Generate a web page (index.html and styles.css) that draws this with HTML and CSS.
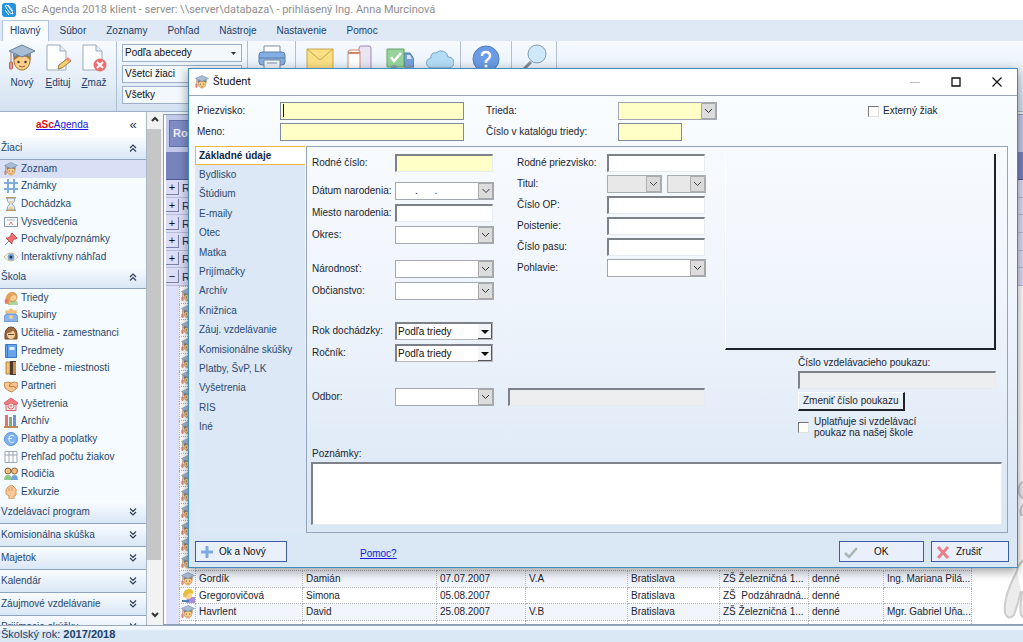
FILE: index.html
```html
<!DOCTYPE html>
<html lang="sk">
<head>
<meta charset="utf-8">
<title>aSc Agenda 2018 klient</title>
<link rel="stylesheet" href="styles.css">
</head>
<body>
<svg class="defs" aria-hidden="true">
  <symbol id="student" viewBox="0 0 28 28">
    <path d="M6 12c-1 9 3 14 8 14s9-5 8-14z" fill="#fbd08b" stroke="#a5702f"/>
    <path d="M6 16c3-1 4-4 8-4s6 2 8 4l1-6H5z" fill="#a97436"/>
    <path d="M6 8v5c5-3 11-3 16 0V8z" fill="#93abc7" stroke="#66809f"/>
    <path d="M14 1L1 7l13 6 13-6z" fill="#a9bdd4" stroke="#66809f"/>
    <path d="M3 8v11" stroke="#a36b62"/><rect x="1.500" y="18" width="3" height="7" rx="1" fill="#f09a8c" stroke="#b25f55"/>
    <circle cx="10.500" cy="18" r="1.200" fill="#4a3320"/><circle cx="17.500" cy="18" r="1.200" fill="#4a3320"/>
    <path d="M11 22q3 2 6 0" fill="none" stroke="#a5602f"/>
  </symbol>
  <symbol id="page" viewBox="0 0 28 28"><path d="M3 1h13l6 6v19H3z" fill="#fdfeff" stroke="#9aa9bb"/><path d="M16 1v6h6" fill="#e9eff6" stroke="#9aa9bb"/></symbol>
  <symbol id="chev-up" viewBox="0 0 8 8"><path d="M1 4l3-3 3 3M1 7.500l3-3 3 3" fill="none" stroke="#2f3f58" stroke-width="1.200"/></symbol>
  <symbol id="chev-down" viewBox="0 0 8 8"><path d="M1 .5l3 3 3-3M1 4l3 3 3-3" fill="none" stroke="#2f3f58" stroke-width="1.200"/></symbol>
</svg>

<header class="titlebar">
  <svg class="i14" viewBox="0 0 14 14"><rect width="14" height="14" rx="3" fill="#2493e0"/><path d="M3 3l5 7 3 1-1-3-5-6zM3 7l4 5M6 2l5 6" fill="none" stroke="#fff"/></svg>
  <span>aSc Agenda 2018 klient - server: \\server\databaza\ - prihlásený Ing. Anna Murcinová</span>
</header>
<nav class="tabs">
  <button class="tab active">Hlavný</button><button class="tab">Súbor</button><button class="tab">Zoznamy</button><button class="tab">Pohľad</button><button class="tab">Nástroje</button><button class="tab">Nastavenie</button><button class="tab">Pomoc</button>
</nav>
<section class="ribbon">
  <div class="group actions">
    <button class="big"><svg class="i28"><use href="#student"/></svg>Nový</button>
    <button class="big"><svg class="i28" viewBox="0 0 28 28"><use href="#page" width="28" height="28"/><path d="M14 25l1-4 9-7 3 3-9 7z" fill="#f5cf6d" stroke="#9b7840"/><path d="M22 15l3 3 2-2-3-3z" fill="#ef8f86"/></svg><span><u>E</u>dituj</span></button>
    <button class="big"><svg class="i28" viewBox="0 0 28 28"><use href="#page" width="28" height="28"/><circle cx="20" cy="21" r="6.500" fill="#ea6f72"/><path d="M17 18l6 6m0-6l-6 6" stroke="#fff" stroke-width="2"/></svg><span><u>Z</u>maž</span></button>
  </div>
  <div class="group filters">
    <select class="flt" aria-label="Zoradenie"><option>Podľa abecedy</option></select>
    <select class="flt" aria-label="Žiaci"><option>Všetci žiaci</option></select>
    <select class="flt" aria-label="Filter"><option>Všetky</option></select>
  </div>
  <div class="group one"><button aria-label="Tlač" class="big"><svg class="i28" viewBox="0 0 28 28"><path d="M6 2h16v9H6z" fill="#fff" stroke="#7c8ca0"/><rect x="1" y="8" width="26" height="13" rx="3" fill="#83aee3" stroke="#5e7ea8"/><path d="M1 14h26" stroke="#5e7ea8"/><path d="M6 16h16v10H6z" fill="#eef3f8" stroke="#7c8ca0"/><path d="M9 19h10" stroke="#7c8ca0"/></svg></button></div>
  <div class="group many">
    <button aria-label="Správa" class="big"><svg class="i28" viewBox="0 0 28 28"><path d="M1 5h26v20H1z" fill="#fbdf83" stroke="#c6a54e"/><path d="M1 5l13 11L27 5" fill="none" stroke="#c6a54e"/></svg></button>
    <button aria-label="Mobil" class="big"><svg class="i28" viewBox="0 0 28 28"><rect x="13" y="2" width="12" height="24" rx="2" fill="#e8e4f2" stroke="#9b8bb5"/><rect x="2" y="6" width="12" height="22" rx="2" fill="#fff" stroke="#d08a6a"/><path d="M2 9h12" stroke="#d08a6a" stroke-width="2"/></svg></button>
    <button aria-label="Doprava" class="big"><svg class="i28" viewBox="0 0 28 28"><path d="M18 9h6l4 6v8H18z" fill="#75a0dc" stroke="#4d73a8"/><path d="M21 11h3l2 4h-5z" fill="#d4e6fa"/><path d="M1 5h17v18H1z" fill="#96d39b" stroke="#64a56b"/><path d="M5 13l3 4 7-8" stroke="#fff" stroke-width="2.500" fill="none"/><circle cx="8" cy="24" r="3" fill="#8b9db0"/><circle cx="22" cy="24" r="3" fill="#8b9db0"/></svg></button>
    <button aria-label="Cloud" class="big"><svg class="i28" viewBox="0 0 28 28"><path d="M6 24a5 5 0 0 1-1-10 4 4 0 0 1 5-5 7 7 0 0 1 12 4 5.500 5.500 0 0 1 1 11z" fill="#b5dcf6" stroke="#78a4c9"/></svg></button>
  </div>
  <div class="group one help"><button aria-label="Pomocník" class="big"><svg class="i28" viewBox="0 0 28 28"><circle cx="14" cy="15" r="13" fill="#6a9be4" stroke="#4c7cc4"/><path d="M10 12q0-4 4-4t4 4q0 2-4 5v2" fill="none" stroke="#fff" stroke-width="2.500"/><circle cx="14" cy="22" r="1.500" fill="#fff"/></svg></button></div>
  <div class="group one find"><button aria-label="Hľadať" class="big"><svg class="i28" viewBox="0 0 28 28"><path d="M11 18L2 27" stroke="#7d8896" stroke-width="3"/><circle cx="17" cy="10" r="9" fill="#cfe9fb" stroke="#7e9cb8"/></svg></button></div>
</section>

<main class="main">
  <aside class="side">
    <div class="brand"><a href="#"><b>aSc</b>Agenda</a><button aria-label="Zbaliť">«</button></div>
    <button class="head">Žiaci<svg><use href="#chev-up"/></svg></button>
    <ul class="items six">
      <li class="sel"><svg><use href="#student"/></svg><a href="#">Zoznam</a></li>
      <li><svg viewBox="0 0 14 14"><path d="M4 0v14M10 0v14M0 4h14M0 10h14" stroke="#82acd8" stroke-width="2"/></svg><a href="#">Známky</a></li>
      <li><svg viewBox="0 0 14 14"><path d="M3 1h8q0 4-3 6 3 2 3 6H3q0-4 3-6-3-2-3-6z" fill="#e4eefa" stroke="#89a4c7"/><path d="M2 .5h10M2 13.500h10" stroke="#b79868" stroke-width="1.500"/><path d="M4 12l3-3 3 3zM5 4h4L7 7z" fill="#f2cf79"/></svg><a href="#">Dochádzka</a></li>
      <li><svg viewBox="0 0 14 14"><path d="M.5 2.500h13v9H.5z" fill="#fff" stroke="#8795aa"/><path d="M3 5h8" stroke="#9fb3cc"/><path d="M5 10l2-3 2 3" fill="none" stroke="#df6e6e"/></svg><a href="#">Vysvedčenia</a></li>
      <li><svg viewBox="0 0 14 14"><path d="M1 13l4-4" stroke="#8291a5"/><path d="M8 1l5 5-1 1-2 0-2 3 0 2-6-6 2 0 3-2 0-2z" fill="#ee7072" stroke="#c75054"/></svg><a href="#">Pochvaly/poznámky</a></li>
      <li><svg viewBox="0 0 14 14"><path d="M0 7q7-8 14 0-7 8-14 0z" fill="#fff" stroke="#d6bb91"/><circle cx="7" cy="7" r="3.500" fill="#7ba7da"/><circle cx="7" cy="7" r="1.500" fill="#26364d"/></svg><a href="#">Interaktívny náhľad</a></li>
    </ul>
    <button class="head">Škola<svg><use href="#chev-up"/></svg></button>
    <ul class="items twelve">
      <li><svg viewBox="0 0 14 14"><path d="M4 14q0-5 5-5t5 5z" fill="#a9d69b"/><circle cx="8.500" cy="6" r="4.500" fill="#fbcf91" stroke="#c78f50"/><path d="M1 13q0-12 7-12 4 0 4 4-6-3-7 8z" fill="#e3a05a"/><circle cx="2.500" cy="10" r="2" fill="#ee7774"/></svg><a href="#">Triedy</a></li>
      <li><svg viewBox="0 0 14 14"><circle cx="3" cy="4" r="2" fill="#f2c078"/><circle cx="11" cy="4" r="2" fill="#f2c078"/><circle cx="7" cy="3" r="2.500" fill="#f2c078"/><path d="M0 11q0-5 4-5h6q4 0 4 5v3H0z" fill="#8cb4e6" stroke="#5a8cc4"/><circle cx="7" cy="9" r="2" fill="#f2d091"/></svg><a href="#">Skupiny</a></li>
      <li><svg viewBox="0 0 14 14"><path d="M1 13Q0 1 7 1t6 12z" fill="#9a6740" stroke="#704826"/><ellipse cx="7" cy="8.500" rx="4" ry="4.500" fill="#fbd09b"/><path d="M3 7q5 0 6-3l2 3V3H3z" fill="#9a6740"/><path d="M4 8.500h6" stroke="#6c4a30"/></svg><a href="#">Učitelia - zamestnanci</a></li>
      <li><svg viewBox="0 0 14 14"><path d="M1.500.5h11v13h-11z" fill="#69a5ea" stroke="#3c78c4"/><path d="M3.500.5v13" stroke="#3c78c4"/><path d="M5.500 3h5v3h-5z" fill="#e6f2ff"/></svg><a href="#">Predmety</a></li>
      <li><svg viewBox="0 0 14 14"><path d="M2 1h4v12H2z" fill="#f3c277" stroke="#b38240"/><path d="M6 0h6v14H6z" fill="#4b3b2e"/><path d="M9 1l3 0v12l-3 0z" fill="#c78e4e"/></svg><a href="#">Učebne - miestnosti</a></li>
      <li><svg viewBox="0 0 14 14"><path d="M0 4l4-1 3 1 3-1 4 1-1 5-5 4-3-1-4-3z" fill="#f9c690" stroke="#c28b52"/><path d="M7 4L5 7l2 1 2-1 3 2" fill="none" stroke="#b07840"/></svg><a href="#">Partneri</a></li>
      <li><svg viewBox="0 0 14 14"><path d="M2 6h10v7.500H2z" fill="#fde8e8" stroke="#d46a70"/><path d="M0 6l7-5 7 5-1 1.500H1z" fill="#f07c80" stroke="#d46a70"/><circle cx="7" cy="9" r="3" fill="#fff" stroke="#e06a70"/><path d="M5.500 9h3M7 7.500v3" stroke="#e06a70"/></svg><a href="#">Vyšetrenia</a></li>
      <li><svg viewBox="0 0 14 14"><path d="M1 1h3v11H1z" fill="#e2736e"/><path d="M5 3h3v9H5z" fill="#78b279"/><path d="M9 1h3v11H9z" fill="#7490d6"/><path d="M0 13h14" stroke="#c08a52" stroke-width="2"/></svg><a href="#">Archív</a></li>
      <li><svg viewBox="0 0 14 14"><circle cx="7" cy="7" r="6.500" fill="#7eb3ee" stroke="#5a92d4"/><path d="M10 4Q5 2 5 7t5 3M4 6.500h4" fill="none" stroke="#dff0ff"/></svg><a href="#">Platby a poplatky</a></li>
      <li><svg viewBox="0 0 14 14"><path d="M1 1.500h12v11H1zM5 1v12M9 1v12M1 5h12" fill="#fff" stroke="#9aa6b5"/></svg><a href="#">Prehľad počtu žiakov</a></li>
      <li><svg viewBox="0 0 14 14"><circle cx="4" cy="4" r="3" fill="#f0bd82" stroke="#8a6239"/><circle cx="10.500" cy="4" r="3" fill="#f0bd82" stroke="#8a6239"/><path d="M0 13q0-5 4-5t4 5z" fill="#8dc88c"/><path d="M7 13q0-5 3.500-5t3.500 5z" fill="#78a2de"/></svg><a href="#">Rodičia</a></li>
      <li><svg viewBox="0 0 14 14"><path d="M4 2l4-2 2 2 2 2v6l-2 1v3H5v-3L2 9V5z" fill="#fbc795" stroke="#d2955c"/><path d="M5 3v3M8 2v4" stroke="#d2955c"/></svg><a href="#">Exkurzie</a></li>
    </ul>
    <button class="head">Vzdelávací program<svg><use href="#chev-down"/></svg></button>
    <button class="head">Komisionálna skúška<svg><use href="#chev-down"/></svg></button>
    <button class="head">Majetok<svg><use href="#chev-down"/></svg></button>
    <button class="head">Kalendár<svg><use href="#chev-down"/></svg></button>
    <button class="head">Záujmové vzdelávanie<svg><use href="#chev-down"/></svg></button>
    <button class="head">Prijímacie skúšky<svg><use href="#chev-down"/></svg></button>
  </aside>
  <div class="scroll">
    <button aria-label="Hore"><svg viewBox="0 0 10 10"><path d="M2 7l3-3 3 3" fill="none" stroke="#333" stroke-width="2"/></svg></button>
    <span class="thumb"></span>
    <button aria-label="Dole"><svg viewBox="0 0 10 10"><path d="M2 3l3 3 3-3" fill="none" stroke="#333" stroke-width="2"/></svg></button>
  </div>
  <section class="grid">
    <div class="groupby"><span>Ročník</span></div>
    <div class="colhead"></div>
    <ul class="groups">
      <li><button>+</button>R</li><li><button>+</button>R</li><li><button>+</button>R</li><li><button>+</button>R</li><li><button>+</button>R</li><li><button>−</button>R</li>
    </ul>
    <div class="tablewrap">
      <table>
        <colgroup><col class="c-icon"><col class="c-sur"><col class="c-name"><col class="c-date"><col class="c-class"><col class="c-city"><col class="c-school"><col class="c-form"><col class="c-teach"></colgroup>
        <tbody>
        <tr><td><svg><use href="#student"/></svg></td><td colspan="8"></td></tr>
        <tr><td><svg><use href="#student"/></svg></td><td colspan="8"></td></tr>
        <tr><td><svg><use href="#student"/></svg></td><td colspan="8"></td></tr>
        <tr><td><svg><use href="#student"/></svg></td><td colspan="8"></td></tr>
        <tr><td><svg><use href="#student"/></svg></td><td colspan="8"></td></tr>
        <tr><td><svg><use href="#student"/></svg></td><td colspan="8"></td></tr>
        <tr><td><svg><use href="#student"/></svg></td><td colspan="8"></td></tr>
        <tr><td><svg><use href="#student"/></svg></td><td colspan="8"></td></tr>
        <tr><td><svg><use href="#student"/></svg></td><td colspan="8"></td></tr>
        <tr><td><svg><use href="#student"/></svg></td><td colspan="8"></td></tr>
        <tr><td><svg><use href="#student"/></svg></td><td colspan="8"></td></tr>
        <tr><td><svg><use href="#student"/></svg></td><td colspan="8"></td></tr>
        <tr><td><svg><use href="#student"/></svg></td><td colspan="8"></td></tr>
        <tr><td><svg><use href="#student"/></svg></td><td colspan="8"></td></tr>
        <tr><td><svg><use href="#student"/></svg></td><td colspan="8"></td></tr>
        <tr><td><svg><use href="#student"/></svg></td><td colspan="8"></td></tr>
        <tr><td><svg><use href="#student"/></svg></td><td colspan="8"></td></tr>
        <tr class="alt"><td><svg><use href="#student"/></svg></td><td>Gordík</td><td>Damián</td><td>07.07.2007</td><td>V.A</td><td>Bratislava</td><td>ZŠ Železničná 1...</td><td>denné</td><td>Ing. Mariana Pilá...</td></tr>
        <tr><td><svg viewBox="0 0 14 14"><path d="M5 14q0-6 5-6h4v6z" fill="#a78fdc"/><circle cx="7" cy="6" r="4" fill="#fbd391"/><path d="M2 8q0-8 6-8 5 0 4 5-4-3-7 3z" fill="#e9bd3e"/><path d="M1 12h7" stroke="#587fbd" stroke-width="2"/></svg></td><td>Gregorovičová</td><td>Simona</td><td>05.08.2007</td><td></td><td>Bratislava</td><td>ZŠ&nbsp; Podzáhradná...</td><td>denné</td><td></td></tr>
        <tr class="alt"><td><svg><use href="#student"/></svg></td><td>Havrlent</td><td>David</td><td>25.08.2007</td><td>V.B</td><td>Bratislava</td><td>ZŠ Železničná 1...</td><td>denné</td><td>Mgr. Gabriel Uňa...</td></tr>
        <tr><td></td><td></td><td></td><td></td><td></td><td></td><td></td><td></td><td></td></tr>
        </tbody>
      </table>
    </div>
    <svg class="hand" viewBox="0 0 20 142" fill="#ececec" stroke="#cccccc" stroke-width="2"><path d="M22 2q-8 3-6 12 2 6 6 6M22 24q-6 4-4 12h4"/><path d="M14 92Q0 118 2 134q3 8 9 2 3-8 7-24M22 80q-8 6-8 12M20 112q-4 14-2 24 2 3 4 2"/></svg>
  </section>
</main>
<footer class="status">Školský rok: <b>2017/2018</b></footer>

<form class="dialog" role="dialog" aria-labelledby="dlg">
  <header class="dtitle">
    <svg class="i14"><use href="#student"/></svg><h1 id="dlg">Študent</h1>
    <button type="button" disabled aria-label="Minimalizovať"><svg viewBox="0 0 10 10"><path d="M0 5.500h10" stroke="#bbb"/></svg></button>
    <button type="button" aria-label="Maximalizovať"><svg viewBox="0 0 10 10"><path d="M1 1h8v8H1z" fill="none" stroke="#111" stroke-width="1.300"/></svg></button>
    <button type="button" aria-label="Zavrieť"><svg viewBox="0 0 10 10"><path d="M.5.5l9 9m0-9l-9 9" stroke="#111" stroke-width="1.200"/></svg></button>
  </header>
  <div class="top">
    <label for="f1">Priezvisko:</label><div class="caretbox"><input id="f1" class="flat yel"><i class="caret"></i></div>
    <label for="f2">Trieda:</label><select id="f2" class="combo yel"><option></option></select>
    <label class="ext"><input type="checkbox">Externý žiak</label>
    <label for="f3">Meno:</label><input id="f3" class="flat yel">
    <label for="f4">Číslo v katalógu triedy:</label><input id="f4" class="flat yel short">
  </div>
  <div class="body">
    <nav class="cats"><div class="catlist">
      <a href="#" class="on">Základné údaje</a><a href="#">Bydlisko</a><a href="#">Štúdium</a><a href="#">E-maily</a><a href="#">Otec</a><a href="#">Matka</a><a href="#">Prijímačky</a><a href="#">Archív</a><a href="#">Knižnica</a><a href="#">Záuj. vzdelávanie</a><a href="#">Komisionálne skúšky</a><a href="#">Platby, ŠvP, LK</a><a href="#">Vyšetrenia</a><a href="#">RIS</a><a href="#">Iné</a>
    </div></nav>
    <div class="panel">
      <div class="upper">
        <div class="fields">
          <div class="pair">
            <div class="col a">
              <div class="row"><label for="a1">Rodné číslo:</label><input id="a1" class="sunk yel"></div>
              <div class="row sp-s"><label for="a2">Dátum narodenia:</label><span class="date"><input id="a2" value=".      ."><button type="button" aria-label="Kalendár"></button></span></div>
              <div class="row"><label for="a3">Miesto narodenia:</label><input id="a3" class="sunk"></div>
              <div class="row"><label for="a4">Okres:</label><select id="a4" class="combo"><option></option></select></div>
              <div class="row sp-m"><label for="a5">Národnosť:</label><select id="a5" class="combo"><option></option></select></div>
              <div class="row"><label for="a6">Občianstvo:</label><select id="a6" class="combo"><option></option></select></div>
            </div>
            <div class="col b">
              <div class="row"><label for="b1">Rodné priezvisko:</label><input id="b1" class="sunk"></div>
              <div class="row"><label for="b2">Titul:</label><select id="b2" class="combo t1" disabled><option></option></select><select class="combo t2" disabled aria-label="Titul za menom"><option></option></select></div>
              <div class="row"><label for="b3">Číslo OP:</label><input id="b3" class="sunk"></div>
              <div class="row"><label for="b4">Poistenie:</label><input id="b4" class="sunk"></div>
              <div class="row"><label for="b5">Číslo pasu:</label><input id="b5" class="sunk"></div>
              <div class="row"><label for="b6">Pohlavie:</label><select id="b6" class="combo"><option></option></select></div>
            </div>
          </div>
          <div class="col a">
            <div class="row sp-l"><label for="c1">Rok dochádzky:</label><select id="c1" class="classic"><option>Podľa triedy</option></select></div>
            <div class="row"><label for="c2">Ročník:</label><select id="c2" class="classic"><option>Podľa triedy</option></select></div>
            <div class="row sp-l wide"><label for="c3">Odbor:</label><select id="c3" class="combo"><option></option></select><input class="sunk gray" readonly aria-label="Názov odboru"></div>
          </div>
        </div>
        <div class="right">
          <div class="photo"></div>
          <div class="voucher">
            <label for="v1">Číslo vzdelávacieho poukazu:</label>
            <input id="v1" class="sunk gray" readonly>
            <button type="button" class="raised">Zmeniť číslo poukazu</button>
            <label class="chk"><input type="checkbox"><span>Uplatňuje si vzdelávací<br>poukaz na našej škole</span></label>
          </div>
        </div>
      </div>
      <label class="noteslabel" for="n1">Poznámky:</label>
      <textarea id="n1" class="sunk notes"></textarea>
    </div>
  </div>
  <footer class="foot">
    <button type="button" class="cmd"><svg viewBox="0 0 14 14"><path d="M7 1v12M1 7h12" stroke="#7fa9e2" stroke-width="3"/></svg><span>Ok a Nový</span></button>
    <a href="#">Pomoc?</a>
    <button type="submit" class="cmd ok"><svg viewBox="0 0 14 14"><path d="M1 8l4 4 8-9" fill="none" stroke="#a9b5b0" stroke-width="2.500"/></svg><span>OK</span></button>
    <button type="button" class="cmd no"><svg viewBox="0 0 14 14"><path d="M2 2l10 11M12 2L2 13" stroke="#e88088" stroke-width="3"/></svg><span>Zrušiť</span></button>
  </footer>
</form>
</body>
</html>
```
FILE: styles.css
```css
* { box-sizing: border-box; }
html, body { height: 100%; }
body { margin: 0; display: flex; flex-direction: column; overflow: hidden; position: relative; background: #dce8f5; color: #1b2430; font: 10px/14px "Liberation Sans", Arial, sans-serif; }
button, input, select, textarea { font: inherit; color: inherit; margin: 0; padding: 0; border-radius: 0; }
button { border: 0; background: none; }
ul { list-style: none; margin: 0; padding: 0; }
.defs { position: absolute; width: 0; height: 0; }
.i14 { width: 14px; height: 14px; }
.i28 { width: 28px; height: 28px; }

.titlebar { flex: none; height: 20px; display: flex; align-items: center; gap: 5px; padding-left: 2px; background: #fff; color: #8e8e8e; font: 11px/20px Roboto, sans-serif; }
.tabs { flex: none; height: 21px; display: flex; padding-left: 2px; background: #dfe9f5; }
.tab { padding: 0 10px; color: #20406a; }
.tab.active { padding: 0 7px; background: #f8fbff; border: 1px solid #b4c6dc; border-bottom: 0; }
.tab.active + .tab { margin-left: 1px; }
.ribbon { flex: none; height: 71px; display: flex; background: linear-gradient(#f7fbff, #e3edf8 60%, #d3e1f1); border-bottom: 1px solid #9fb1c8; }
.group { border-right: 1px solid #afbfd3; display: flex; align-items: flex-start; padding-top: 3px; }
.actions { width: 117px; padding-left: 4px; }
.big { width: 36px; display: flex; flex-direction: column; align-items: center; gap: 4px; color: #20406a; }
.filters { width: 131px; padding: 3px 5px 0; flex-direction: column; gap: 3px; }
.flt { width: 120px; height: 18px; padding: 0 2px; appearance: none; border: 1px solid #9db0c8; color: #111; background: #f3f8fd url("data:image/svg+xml,%3Csvg xmlns='http://www.w3.org/2000/svg' width='8' height='5'%3E%3Cpath d='M1 1h5L3.500 4z' fill='%23333'/%3E%3C/svg%3E") no-repeat right 3px center; }
.one { width: 48px; justify-content: center; }
.help { width: 51px; }
.find { width: 45px; }
.many { width: 165px; padding-left: 6px; gap: 4px; }

.main { flex: 1; min-height: 0; display: flex; background: #eaf2fb; }
.side { width: 147px; flex: none; background: #f6fbff; color: #27466d; overflow: hidden; border-right: 1px solid #a9b8cb; }
.brand { height: 25px; display: flex; align-items: center; padding-left: 36px; background: #fff; }
.brand a { flex: 1; color: #1818e0; }
.brand b { color: #e01010; }
.brand button { width: 26px; font-size: 13px; color: #27364d; }
.head { width: 100%; height: 23px; display: flex; align-items: center; justify-content: space-between; padding: 0 9px 0 1px; background: linear-gradient(#f9fcff, #d9e7f6); border-bottom: 1px solid #8fa3bc; }
.head svg { width: 8px; height: 8px; }
.items { display: grid; grid-auto-rows: 1fr; }
.six, .groups { height: 106px; }
.twelve { height: 212px; }
.items li { display: flex; align-items: center; gap: 3px; padding-left: 4px; }
.items svg { width: 14px; height: 14px; flex: none; }
.items a { color: inherit; text-decoration: none; }
.items .sel { background: #d9dff5; }
.scroll { width: 16px; flex: none; display: flex; flex-direction: column; background: #f2f2f2; }
.scroll button { height: 17px; flex: none; }
.scroll svg { width: 10px; height: 10px; }
.thumb { flex: none; height: 84%; width: 14px; background: #c6c6c6; }
.scroll button:last-child { margin-top: auto; }

.grid { flex: 1; min-width: 0; display: flex; flex-direction: column; position: relative; margin-top: 2px; overflow: hidden; background: #fff; border: 1px solid #8d9cb2; border-right: 0; padding-left: 2px; }
.groupby { flex: none; height: 37px; padding: 5px 3px; background: #c2c9ea; }
.groupby span { display: block; width: 60px; height: 27px; padding-left: 3px; background: #7f8bc4; border: 1px solid #6470a8; color: #eef; font: bold 11px/25px "Liberation Sans", sans-serif; }
.colhead { flex: none; height: 28px; background: #7783bd; border-bottom: 1px solid #515d92; }
.groups { flex: none; display: grid; grid-auto-rows: 1fr; background: #dcddf6; font-size: 11px; color: #222a5a; }
.groups li { display: flex; align-items: center; gap: 3px; border-bottom: 1px solid #b7bbdc; }
.groups button { width: 13px; height: 13px; line-height: 11px; border: solid; border-width: 0 1px 1px 0; border-color: #7a80aa; color: #111; }
.tablewrap { flex: 1; min-height: 0; overflow: hidden; padding-left: 13px; background: linear-gradient(90deg, #dfe1fb 13px, #fff 13px); }
table { table-layout: fixed; width: 792px; height: 352px; border-collapse: collapse; }
tr { height: 16px; }
td { padding: 0 0 0 3px; line-height: 12px; border: 1px dotted #b3b3bb; white-space: nowrap; overflow: hidden; }
td:first-child { padding: 0; }
td svg { display: block; width: 14px; height: 14px; margin: auto; }
.alt { background: #f3f5fd; }
.c-icon { width: 16px; } .c-sur { width: 107px; } .c-name { width: 134px; } .c-date { width: 89px; } .c-class { width: 102px; }
.c-city { width: 92px; } .c-school { width: 89px; } .c-form { width: 75px; } .c-teach { width: 88px; }
.hand { position: absolute; right: 0; bottom: 3px; width: 20px; height: 142px; }
.status { flex: none; height: 17px; padding-left: 1px; background: linear-gradient(#f3f8fd 3px, #dae7f5 5px); border-top: 1px solid #9aa9bc; color: #20406a; font-size: 11px; line-height: 17px; }

.dialog { position: absolute; inset: 68px 5px 74px 188px; display: flex; flex-direction: column; background: linear-gradient(#fafdff 20px, #f0f5fc 45%, #dae7f5 90%); border: 1px solid #3f8cc0; box-shadow: 0 3px 10px rgba(0, 0, 0, .4); }
.dtitle { flex: none; height: 27px; display: flex; align-items: center; background: #fff; border-bottom: 1px solid #9aa6b6; padding-left: 6px; }
.dtitle h1 { flex: 1; margin: 0 0 0 4px; color: #111; font: 11px/16px Roboto, sans-serif; }
.dtitle button { width: 41px; height: 26px; display: grid; place-items: center; }
.dtitle svg:not(.i14) { width: 10px; height: 10px; }
.top { flex: none; display: grid; grid-template-columns: 83px 184px 22px 132px 99px 151px 1fr; grid-auto-rows: 18px; row-gap: 3px; padding: 6px 0 0 8px; align-items: center; }
.top > :nth-child(3), .top > :nth-child(8) { grid-column: 4; }
.ext { grid-column: 7; display: flex; align-items: center; gap: 4px; }
.top > :nth-child(6) { grid-column: 1; }
.flat { width: 100%; height: 18px; border: 1px solid #7f8b99; background: #fff; }
.short { width: 64px; }
.caretbox { position: relative; height: 18px; }
.caret { position: absolute; left: 3px; top: 2px; width: 1px; height: 13px; background: #111; }
.combo { width: 99px; height: 18px; appearance: none; border: 1px solid #a3a8b0; background: #fff url("data:image/svg+xml,%3Csvg xmlns='http://www.w3.org/2000/svg' width='15' height='16'%3E%3Cpath d='M0 0h15v16H0z' fill='%23dcdcdc'/%3E%3Cpath d='M.5.5h14v15H.5z' fill='none' stroke='%23a8a8a8'/%3E%3Cpath d='M4 6l3.500 3.500L11 6' fill='none' stroke='%23333'/%3E%3C/svg%3E") no-repeat right center; }
.combo:disabled { background-color: #ededee; opacity: 1; filter: contrast(.8) brightness(1.08); }
.yel, .sunk.yel { background-color: #ffffc8; }
input[type=checkbox] { appearance: none; width: 11px; height: 11px; flex: none; background: #fff; border: solid; border-width: 1px; border-color: #777 #e2e2e2 #e2e2e2 #777; }
.body { flex: 1; min-height: 0; display: flex; gap: 1px; padding: 5px 9px 0 6px; }
.cats { width: 110px; flex: none; background: #dce8f5; }
.catlist { display: grid; grid-auto-rows: 1fr; height: 291px; }
.cats a { display: flex; align-items: center; padding-left: 4px; color: #2b4a72; text-decoration: none; white-space: nowrap; }
.cats .on { color: #10284c; font-weight: bold; background: #fff; border: 1px solid #f2b63c; border-right: 0; padding-left: 3px; }
.panel { flex: 1; min-width: 0; display: flex; flex-direction: column; border: 1px solid #93a4bb; padding: 7px 5px 7px 4px; }
.upper { flex: 1; min-height: 0; display: flex; justify-content: space-between; }
.fields { width: 394px; padding-left: 1px; }
.pair { display: flex; gap: 23px; }
.col { display: flex; flex-direction: column; gap: 4px; }
.col.b { gap: 3px; }
.row { display: flex; align-items: center; height: 18px; }
.row label { width: 83px; flex: none; white-space: nowrap; }
.b .row label { width: 90px; }
.sp-s { margin-top: 6px; } .sp-m { margin-top: 12px; } .sp-l { margin-top: 22px; }
.sunk { width: 98px; height: 18px; background: #fff; border: solid; border-width: 2px 1px 1px 2px; border-color: #7d828a #e6ebf1 #e6ebf1 #7d828a; }
.gray { background: #eceeef; }
.wide .sunk { flex: 1; margin-left: 14px; }
.t1 { width: 55px; } .t2 { width: 39px; margin-left: 5px; }
.date { display: flex; width: 99px; height: 18px; border: 1px solid #a3a8b0; background: #fff; }
.date input { flex: 1; min-width: 0; border: 0; padding-left: 19px; white-space: pre; background: none; }
.date button { width: 15px; border: 1px solid #a8a8a8; background: #dcdcdc url("data:image/svg+xml,%3Csvg xmlns='http://www.w3.org/2000/svg' width='8' height='6'%3E%3Cpath d='M.5 1L4 4.500 7.500 1' fill='none' stroke='%23333'/%3E%3C/svg%3E") no-repeat center; }
.classic { width: 98px; height: 18px; appearance: none; padding: 0 1px; color: #111; border: solid; border-width: 2px 1px 1px 2px; border-color: #7d828a #b5b9bf #b5b9bf #7d828a; background: #fff url("data:image/svg+xml,%3Csvg xmlns='http://www.w3.org/2000/svg' width='14' height='15'%3E%3Cpath d='M0 0h14v15H0z' fill='%23f2f5f9'/%3E%3Cpath d='M0 14.500h13.500V0' fill='none' stroke='%23555'/%3E%3Cpath d='M3 6h8l-4 4z' fill='%23000'/%3E%3C/svg%3E") no-repeat right center; }
.right { width: 271px; margin-right: 6px; }
.photo { height: 196px; border: solid; border-width: 0 2px 2px 1px; border-color: #fff #1d222b #1d222b #fff; }
.voucher { display: flex; flex-direction: column; align-items: flex-start; padding: 6px 0 0 73px; }
.voucher > .sunk { width: 100%; height: 18px; margin: 1px 0 3px; }
.raised { height: 19px; padding: 0 5px 0 4px; white-space: nowrap; background: #eaf0f8; border: solid; border-width: 1px 2px 2px 1px; border-color: #fff #1d222b #1d222b #fff; }
.chk { display: flex; align-items: center; gap: 5px; margin-top: 5px; line-height: 11px; }
.noteslabel { flex: none; height: 15px; padding-left: 1px; }
.notes { flex: none; display: block; width: 100%; height: 63px; resize: none; }
.foot { flex: none; height: 34px; display: flex; align-items: center; padding: 3px 8px 0 6px; }
.foot a { margin: 4px auto 0 73px; color: #1616e0; }
.cmd { display: flex; align-items: center; width: 92px; height: 21px; padding: 0 4px; background: #e9f0fb; border: 1px solid #3b5ba5; color: #111; }
.cmd svg { width: 14px; height: 14px; flex: none; }
.cmd span { margin-left: 5px; }
.ok { width: 85px; margin-right: 7px; }
.ok span { margin-left: 16px; }
.no { width: 78px; }
.no span { margin-left: 6px; }
```
